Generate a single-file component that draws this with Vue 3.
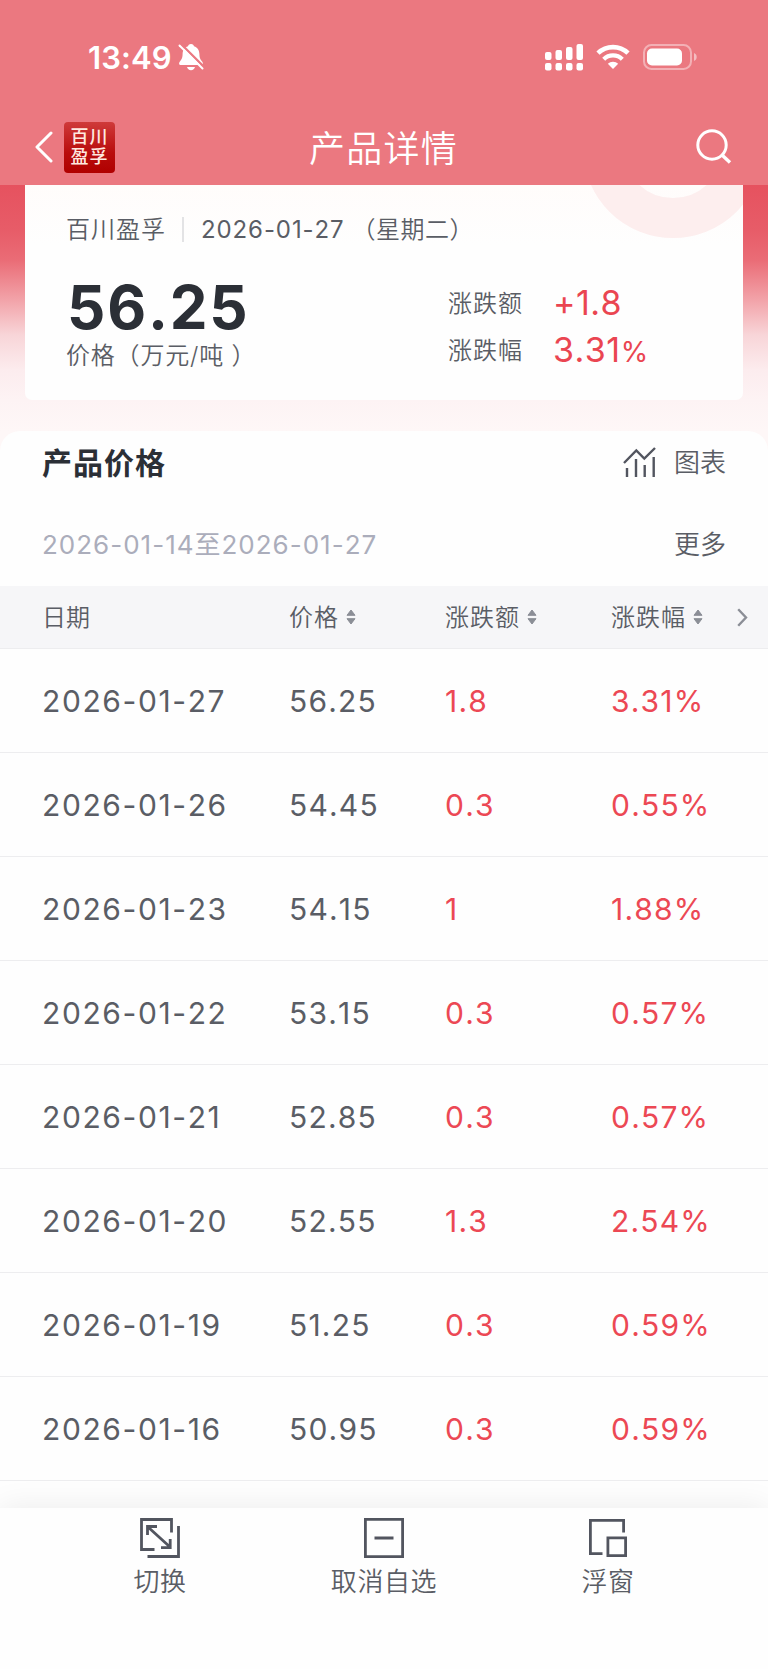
<script setup>
import { ref } from 'vue';

const product = ref({
    source: '百川盈孚',
    date: '2026-01-27',
    weekday: '（星期二）',
    price: '56.25',
    unit: '价格（万元/吨 ）',
    change: '+1.8',
    percent: '3.31'
});

const columns = ['价格', '涨跌额', '涨跌幅'];

const rows = ref([
    { date: '2026-01-27', price: '56.25', change: '1.8', percent: '3.31%' },
    { date: '2026-01-26', price: '54.45', change: '0.3', percent: '0.55%' },
    { date: '2026-01-23', price: '54.15', change: '1', percent: '1.88%' },
    { date: '2026-01-22', price: '53.15', change: '0.3', percent: '0.57%' },
    { date: '2026-01-21', price: '52.85', change: '0.3', percent: '0.57%' },
    { date: '2026-01-20', price: '52.55', change: '1.3', percent: '2.54%' },
    { date: '2026-01-19', price: '51.25', change: '0.3', percent: '0.59%' },
    { date: '2026-01-16', price: '50.95', change: '0.3', percent: '0.59%' }
]);
</script>

<template>
<div class="page">
    <header class="header">
        <div class="status-bar">
            <div class="status-left">
                <span class="time">13:49</span>
                <svg class="bell" width="26" height="28" viewBox="0 0 26 28">
                    <path d="M13 1c-1.900 0-2.800 1.100-3 2.200C6.300 4.400 4.700 7.300 4.600 11c-.1 4-.8 5.200-2.500 7.200C.4 20.200 1 22 3 22h20c2 0 2.600-1.800.9-3.800-1.700-2-2.400-3.200-2.500-7.200-.1-3.700-1.700-6.600-5.400-7.800C15.800 2.100 14.900 1 13 1zM9 24h8c-.5 2-2 3.200-4 3.200S9.500 26 9 24z" fill="#fff" />
                    <path d="M3 1 27 25" stroke="#eb7880" stroke-width="2.400" />
                    <path d="M1.500 2.500 24.500 25.500" stroke="#fff" stroke-width="2" stroke-linecap="round" />
                </svg>
            </div>
            <div class="status-right">
                <svg width="38" height="27" viewBox="0 0 38 27" fill="#fff">
                    <rect x="0" y="8" width="6.500" height="8" rx="2" />
                    <rect x="10.500" y="6" width="6.500" height="10" rx="2" />
                    <rect x="21" y="3" width="6.500" height="13" rx="2" />
                    <rect x="31.500" y="0" width="6.500" height="16" rx="2" />
                    <rect x="0" y="19" width="6.500" height="7.500" rx="2" />
                    <rect x="10.500" y="19" width="6.500" height="7.500" rx="2" />
                    <rect x="21" y="19" width="6.500" height="7.500" rx="2" />
                    <rect x="31.500" y="19" width="6.500" height="7.500" rx="2" />
                </svg>
                <svg class="wifi" width="34" height="26" viewBox="0 0 34 26" fill="none" stroke="#fff">
                    <path d="M2 9.200a21.500 21.500 0 0 1 30 0" stroke-width="4.600" />
                    <path d="M7.700 15.200a13.300 13.300 0 0 1 18.600 0" stroke-width="4.300" />
                    <path d="M17 25l-5.200-5.200a7.500 7.500 0 0 1 10.400 0z" fill="#fff" stroke="none" />
                </svg>
                <svg class="battery" width="54" height="26" viewBox="0 0 54 26">
                    <rect x="1" y="1" width="47" height="24" rx="7.500" fill="none" stroke="#fff" stroke-opacity=".42" stroke-width="2" />
                    <rect x="4" y="4.500" width="35" height="17" rx="5" fill="#fff" />
                    <path d="M51 9v8c1.800-.7 2.700-2.200 2.700-4S52.800 9.700 51 9z" fill="#fff" fill-opacity=".5" />
                </svg>
            </div>
        </div>
        <nav class="nav-bar">
            <div class="nav-left">
                <svg width="18" height="32" viewBox="0 0 18 32" fill="none" stroke="#fff" stroke-width="3" stroke-linecap="round" stroke-linejoin="round">
                    <path d="M16 2 2 16l14 14" />
                </svg>
                <div class="logo">
                    <span>百川</span>
                    <span>盈孚</span>
                </div>
            </div>
            <h1>产品详情</h1>
            <svg class="search" width="36" height="36" viewBox="0 0 36 36" fill="none" stroke="#fff" stroke-width="3">
                <circle cx="16" cy="16" r="14.200" />
                <path d="M26 26l8 7.500" stroke-width="3.400" />
            </svg>
        </nav>
    </header>

    <section class="hero">
        <div class="card">
            <div class="ring"></div>
            <div class="card-meta">
                <span class="cjk">{{ product.source }}</span>
                <i class="divider"></i>
                <span class="card-date">{{ product.date }}</span>
                <span class="cjk weekday">{{ product.weekday }}</span>
            </div>
            <div class="card-body">
                <div class="card-price">
                    <div class="price">{{ product.price }}</div>
                    <div class="unit">{{ product.unit }}</div>
                </div>
                <div class="card-change">
                    <div class="change-row">
                        <span class="label">涨跌额</span>
                        <span class="value">{{ product.change }}</span>
                    </div>
                    <div class="change-row">
                        <span class="label">涨跌幅</span>
                        <span class="value">{{ product.percent }}<small>%</small></span>
                    </div>
                </div>
            </div>
        </div>
    </section>

    <main class="panel">
        <div class="panel-head">
            <h2>产品价格</h2>
            <div class="chart-link">
                <svg width="34" height="30" viewBox="0 0 34 30" fill="none" stroke="#52555f" stroke-width="2.400">
                    <path d="M1 16 13.300 3.500l8 8L32 1" />
                    <path d="M4 21v9M13 12v18M21.700 18v12M30.700 10v20" />
                </svg>
                <span class="cjk">图表</span>
            </div>
        </div>
        <div class="range">
            <span class="range-text">2026-01-14至2026-01-27</span>
            <span class="more">更多</span>
        </div>
        <div class="table-row table-head">
            <div class="head-date cjk">日期</div>
            <div v-for="column in columns" :key="column" class="sortable">
                <span class="cjk">{{ column }}</span>
                <svg width="10" height="16" viewBox="0 0 10 16" fill="#8b8e96" stroke="#8b8e96" stroke-linejoin="round">
                    <path d="M5 1 9 6.300H1zM5 15 9 9.700H1z" />
                </svg>
            </div>
            <svg class="next" width="11" height="19" viewBox="0 0 11 19" fill="none" stroke="#8b8e96" stroke-width="2.400">
                <path d="M1.200 1.200 9 9.500l-7.800 8.300" />
            </svg>
        </div>
        <div v-for="row in rows" :key="row.date" class="table-row">
            <div class="date">{{ row.date }}</div>
            <div>{{ row.price }}</div>
            <div class="up">{{ row.change }}</div>
            <div class="up">{{ row.percent }}</div>
        </div>
    </main>

    <footer class="toolbar">
        <div class="tool">
            <svg width="40" height="40" viewBox="0 0 40 40" fill="none" stroke="#52555f" stroke-width="2.800">
                <path d="M14.500 31.500H1.500V1.500h30v13" />
                <path d="M38.500 8v30.500H7.500" />
                <path d="M8 9l22 20M7.500 17V8.500H17M21 29.700h9.200V21" />
            </svg>
            <span>切换</span>
        </div>
        <div class="tool">
            <svg width="40" height="40" viewBox="0 0 40 40" fill="none" stroke="#52555f" stroke-width="2.800">
                <path d="M1.400 1.400h37.200v37.200H1.400zM10.500 20h19" />
            </svg>
            <span>取消自选</span>
        </div>
        <div class="tool">
            <svg width="40" height="40" viewBox="0 0 40 40" fill="none" stroke="#52555f" stroke-width="2.800">
                <path d="M14.500 35.600H2.400V2.400h33.200v12.100" />
                <path d="M19.900 19.900h17.700v17.700H19.900z" />
            </svg>
            <span>浮窗</span>
        </div>
    </footer>
</div>
</template>

<style>
body {
    margin: 0;
    background: #fefefe;
}
</style>

<style scoped>
.page {
    display: flex;
    flex-direction: column;
    width: 768px;
    height: 1669px;
    overflow: hidden;
    background: #fefefe;
    color: #5a5d65;
    font-family: Inter, "Noto Sans CJK SC", sans-serif;
    font-weight: 350;
    font-kerning: none;
}

/* the CJK face sits low in its line box */
.cjk {
    padding-bottom: 4px;
}

.header {
    display: flex;
    flex-direction: column;
    height: 185px;
    flex: none;
    background: #eb7880;
    color: #fff;
}

.status-bar {
    display: flex;
    align-items: center;
    justify-content: space-between;
    height: 115px;
    box-sizing: border-box;
    padding: 0 71px 1px 88px;
}

.status-left, .status-right {
    display: flex;
    align-items: center;
}

.time {
    font-size: 31px;
    font-weight: 600;
    letter-spacing: 0.1px;
}

.bell {
    margin-left: 6px;
}

.wifi {
    margin-left: 13px;
}

.battery {
    margin-left: 13px;
}

.nav-bar {
    display: grid;
    grid-template-columns: 1fr auto 1fr;
    align-items: center;
    height: 64px;
    padding: 0 36px 0 35px;
}

.nav-left {
    display: flex;
    align-items: center;
    gap: 11px;
}

.logo {
    display: flex;
    flex-direction: column;
    align-items: center;
    justify-content: center;
    width: 51px;
    height: 51px;
    border-radius: 4px;
    background: linear-gradient(#cf3a3a, #b90d0d 60%, #b00000);
    color: #ffe9e0;
    font-size: 18px;
    font-weight: 500;
    line-height: 20px;
    letter-spacing: 1px;
}

h1 {
    margin: 0;
    padding-bottom: 3px;
    font-size: 36px;
    font-weight: 350;
    letter-spacing: 1.3px;
}

.search {
    justify-self: end;
}

.hero {
    height: 246px;
    flex: none;
    box-sizing: border-box;
    padding: 0 25px;
    background: linear-gradient(#e6525f 0, #e75c68 45px, #ea6c76 75px, #f2a3a9 115px, #f8d5d8 150px, #fcecee 185px, #fdf3f4 215px, #fef7f7 246px);
}

.card {
    position: relative;
    height: 215px;
    box-sizing: border-box;
    padding: 26px 42px 0 41px;
    overflow: hidden;
    border-radius: 0 0 7px 7px;
    background: linear-gradient(#fffcfb, #fefefe 60px);
}

.ring {
    position: absolute;
    top: -127px;
    left: 558px;
    width: 100px;
    height: 100px;
    border: 40px solid #fdeeee;
    border-radius: 50%;
}

.card-meta {
    position: relative;
    display: flex;
    align-items: center;
    height: 36px;
    font-size: 24px;
    letter-spacing: 1px;
}

.divider {
    width: 2px;
    height: 25px;
    margin: 0 17px 0 16px;
    background: #e3e3e5;
}

.card-date {
    margin-right: 7px;
    font-weight: 400;
    letter-spacing: 0.9px;
}

.weekday {
    letter-spacing: 0.5px;
}

.card-body {
    display: flex;
    justify-content: space-between;
    padding-top: 24px;
}

.price {
    height: 72px;
    margin-left: 1px;
    color: #2b2f36;
    font-size: 60px;
    font-weight: 700;
    line-height: 72px;
    letter-spacing: 1.8px;
}

.unit {
    font-size: 24px;
    line-height: 26px;
    letter-spacing: 0.8px;
}

.card-change {
    width: 253px;
    padding-top: 8px;
}

.change-row {
    display: flex;
    align-items: center;
    height: 47px;
}

.label {
    width: 105px;
    padding-bottom: 2px;
    font-size: 24px;
    letter-spacing: 1px;
}

.value {
    color: #ea4551;
    font-size: 34px;
    font-weight: 400;
    letter-spacing: 0.5px;
}

.value small {
    font-size: 28px;
}

.panel {
    flex: none;
    height: 1077px;
    border-radius: 20px 20px 0 0;
    background: #fefefe;
    box-shadow: 0 -20px 0 20px #fef7f7;
    clip-path: inset(0);
}

.panel-head {
    display: flex;
    align-items: center;
    justify-content: space-between;
    height: 64px;
    box-sizing: border-box;
    padding: 0 42px 2px;
}

h2 {
    margin: 0;
    padding-bottom: 2px;
    color: #2b2f36;
    font-size: 30px;
    font-weight: 700;
    letter-spacing: 1px;
}

.chart-link {
    display: flex;
    align-items: center;
    gap: 17px;
    font-size: 26px;
}

.range {
    display: flex;
    align-items: center;
    justify-content: space-between;
    height: 91px;
    padding: 4px 42px 0;
    box-sizing: border-box;
    font-size: 26px;
}

.range-text {
    color: #abadbb;
    font-weight: 400;
    letter-spacing: 1px;
}

.table-row {
    position: relative;
    display: grid;
    grid-template-columns: 247px 156px 166px 1fr;
    align-items: center;
    height: 104px;
    box-sizing: border-box;
    padding-left: 42px;
    border-bottom: 1px solid #ededef;
    font-size: 30px;
    font-weight: 400;
    letter-spacing: 1.2px;
}

.table-head {
    height: 63px;
    background: #f6f6f8;
    font-size: 24px;
    font-weight: 350;
    letter-spacing: 1px;
}

.head-date {
    letter-spacing: 0;
}

.sortable {
    display: flex;
    align-items: center;
    gap: 7px;
}

.next {
    position: absolute;
    top: 22px;
    right: 20px;
}

.date {
    letter-spacing: 1.6px;
}

.up {
    color: #ec4854;
}

.toolbar {
    position: relative;
    display: flex;
    flex: 1;
    box-sizing: border-box;
    padding: 10px 48px 0;
    background: #fefefe;
    box-shadow: 0 0 30px rgba(0, 0, 0, 0.08);
}

.tool {
    display: flex;
    flex: 1;
    flex-direction: column;
    align-items: center;
    gap: 6px;
    font-size: 26px;
    line-height: 36px;
    letter-spacing: 0.6px;
}
</style>
